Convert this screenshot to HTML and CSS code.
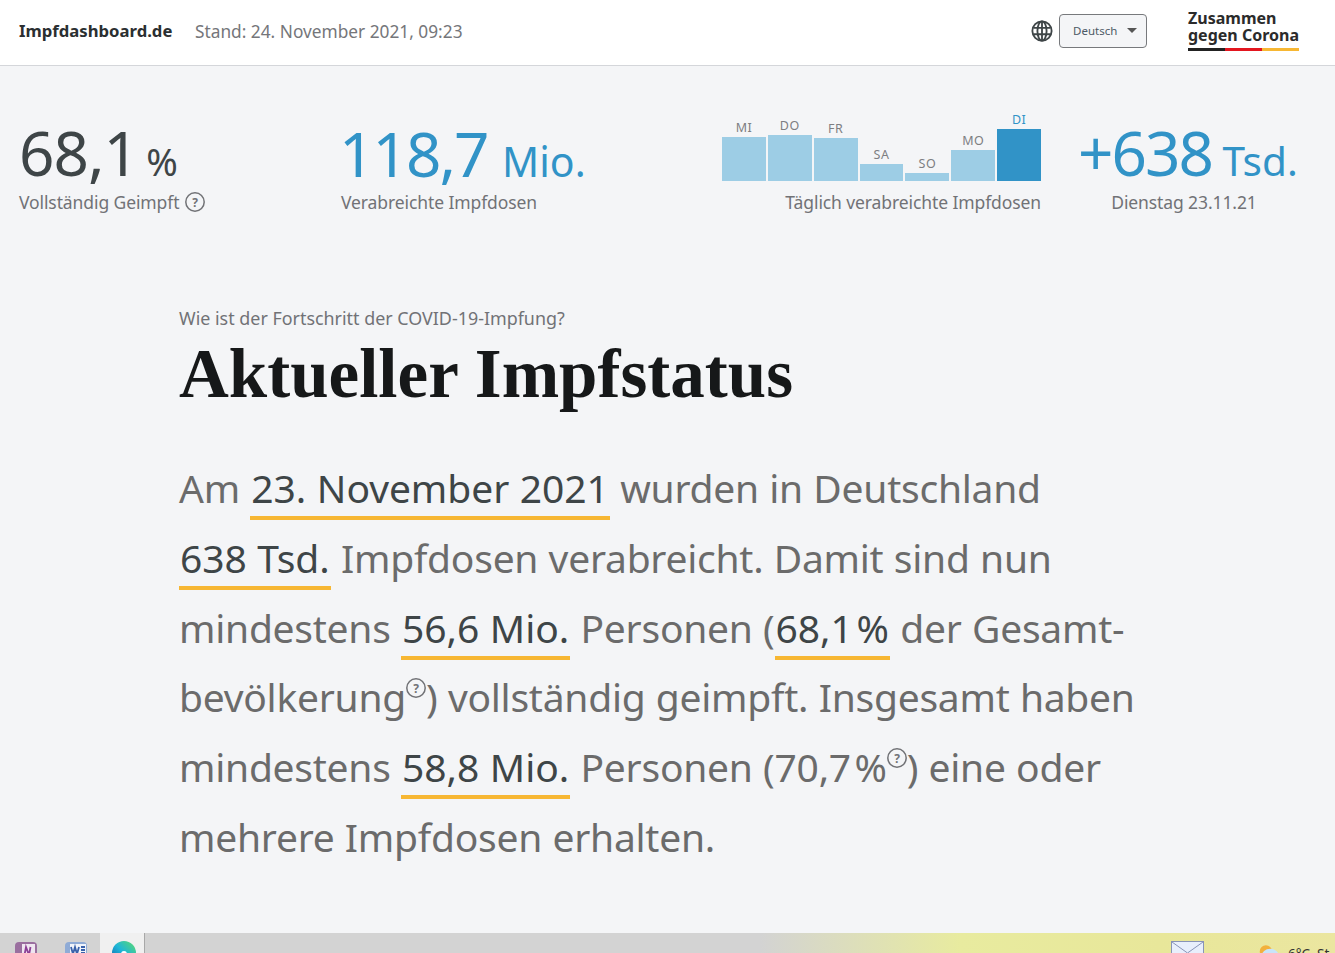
FILE: index.html

```html
<!DOCTYPE html>
<html lang="de">
<head>
  <meta charset="UTF-8">
  <title>Impfdashboard.de</title>
  <link rel="stylesheet" href="styles.css">
</head>
<body>

<header class="topbar">
  <div class="brand">Impfdashboard.de</div>
  <div class="stand">Stand: 24. November 2021, 09:23</div>
  <svg class="globe" viewBox="0 0 24 24">
    <circle cx="12" cy="12" r="10.500"/>
    <ellipse cx="12" cy="12" rx="5" ry="10.500"/>
    <path d="M12 1.500V22.500M2.500 8.500H21.500M2.500 15.500H21.500"/>
  </svg>
  <div class="lang">Deutsch <span class="caret"></span></div>
  <div class="logo">
    <div>Zusammen</div>
    <div>gegen Corona</div>
    <div class="flag"><span class="black"></span><span class="red"></span><span class="gold"></span></div>
  </div>
</header>

<section class="stats">
  <div class="stat">
    <div class="num">68,1 <small class="pct">%</small></div>
    <div class="cap">Vollständig Geimpft
      <svg class="help" viewBox="0 0 20 20"><circle cx="10" cy="10" r="9.200"/><text x="10" y="14.500">?</text></svg>
    </div>
  </div>
  <div class="stat">
    <div class="num blue">118,7 <small>Mio.</small></div>
    <div class="cap">Verabreichte Impfdosen</div>
  </div>
  <div class="stat">
    <div class="bars">
      <div class="day"><span>MI</span><i style="height:44px"></i></div>
      <div class="day"><span>DO</span><i style="height:46px"></i></div>
      <div class="day"><span>FR</span><i style="height:43px"></i></div>
      <div class="day"><span>SA</span><i style="height:17px"></i></div>
      <div class="day"><span>SO</span><i style="height:8px"></i></div>
      <div class="day"><span>MO</span><i style="height:31px"></i></div>
      <div class="day today"><span>DI</span><i style="height:52px"></i></div>
    </div>
    <div class="cap right">Täglich verabreichte Impfdosen</div>
  </div>
  <div class="stat center">
    <div class="num blue">+638 <small class="tsd">Tsd.</small></div>
    <div class="cap">Dienstag 23.11.21</div>
  </div>
</section>

<main class="status">
  <p class="kicker">Wie ist der Fortschritt der COVID-19-Impfung?</p>
  <h1>Aktueller Impfstatus</h1>
  <p class="lead">
    Am <b>23. November 2021</b> wurden in Deutschland<br>
    <b>638 Tsd.</b> Impfdosen verabreicht. Damit sind nun<br>
    mindestens <b>56,6 Mio.</b> Personen (<b>68,1&#8202;%</b> der Gesamt-<br>
    bevölkerung<svg class="help sup" viewBox="0 0 20 20"><circle cx="10" cy="10" r="9.200"/><text x="10" y="14.500">?</text></svg>) vollständig geimpft. Insgesamt haben<br>
    mindestens <b>58,8 Mio.</b> Personen (70,7&#8202;%<svg class="help sup" viewBox="0 0 20 20"><circle cx="10" cy="10" r="9.200"/><text x="10" y="14.500">?</text></svg>) eine oder<br>
    mehrere Impfdosen erhalten.
  </p>
</main>

<footer class="taskbar">
  <div class="task">
    <svg viewBox="0 0 24 24"><rect x="1" y="1" width="22" height="22" rx="4" fill="#9a6f9f"/><rect x="8" y="3" width="13" height="18" fill="#efe6f0"/><path d="M10.500 14L12 6L15 14L16.500 6" stroke="#8d3f96" stroke-width="1.800" fill="none"/></svg>
  </div>
  <div class="task">
    <svg viewBox="0 0 24 24"><rect x="1" y="1" width="22" height="22" rx="4" fill="#8fabd6"/><rect x="6" y="3" width="16" height="18" fill="#f1f4fa"/><path d="M7 6L9 13L11 6L13 13L15 6M17 6H21M17 9H21M17 12H21" stroke="#3a62ab" stroke-width="1.800" fill="none"/></svg>
  </div>
  <div class="task active">
    <svg viewBox="0 0 24 24"><defs><linearGradient id="edge" x1="0" y1="1" x2="1" y2="0"><stop offset="0" stop-color="#0c59a4"/><stop offset=".5" stop-color="#1fb6d8"/><stop offset="1" stop-color="#5fdc6a"/></linearGradient></defs><circle cx="12" cy="12" r="12" fill="url(#edge)"/><circle cx="12" cy="13" r="3" fill="#fff"/></svg>
  </div>
  <div class="sep"></div>
  <div class="tray">
    <svg class="mail" viewBox="0 0 33 23"><rect x=".5" y=".5" width="32" height="22" fill="#e8effc" stroke="#8894b8"/><path d="M1 1L16.500 12L32 1" fill="none" stroke="#8894b8"/></svg>
    <svg class="cloud" viewBox="0 0 24 20"><circle cx="9" cy="7" r="7" fill="#f2b13c"/><ellipse cx="14" cy="13" rx="10" ry="9" fill="#c8e4fa"/></svg>
    <span class="weather">6°C&nbsp;&nbsp;St</span>
  </div>
</footer>

</body>
</html>
```

FILE: styles.css

```css
* { box-sizing: border-box; margin: 0; padding: 0; }
html, body { width: 100%; height: 100%; overflow: hidden; }
body {
  display: flex; flex-direction: column;
  background: #f4f5f7; color: #6b6b6b;
  font-family: 'Noto Sans', sans-serif;
}

.topbar {
  display: flex; align-items: center; flex: none;
  height: 66px; padding: 0 36px 4px 19px;
  background: #fff; border-bottom: 1px solid #d4d6da;
}
.brand { font-size: 16.7px; font-weight: 700; color: #2b2f31; width: 176px; }
.stand { font-size: 17.3px; color: #75767a; flex: 1; padding-top: 1px; }
.globe { width: 22px; height: 22px; margin-right: 6px; fill: none; stroke: #3e4547; stroke-width: 2; }
.lang {
  display: flex; align-items: center; justify-content: space-between;
  width: 88px; height: 34px; padding: 0 9px 0 13px;
  background: #f4f5f7; border: 1px solid #77797c; border-radius: 4px;
  font-size: 11.5px; color: #4d5a66;
}
.caret { border-top: 5px solid #555; border-left: 5px solid transparent; border-right: 5px solid transparent; }
.logo {
  margin-left: 41px; width: 111px;
  font-size: 16px; font-weight: 700; line-height: 17px; color: #2b2b2b;
  white-space: nowrap;
}
.flag { display: flex; height: 3px; margin-top: 4px; }
.flag span { flex: 1; }
.black { background: #222; }
.red { background: #e3161f; }
.gold { background: #f7b733; }

.stats {
  display: grid; grid-template-columns: 322px 381px 358px 208px;
  flex: none; padding: 46px 0 0 19px; height: 149px; align-items: end;
}
.num { font-size: 62px; line-height: 56px; color: #3e4547; white-space: nowrap; letter-spacing: -1px; word-spacing: -7px; }
.num small { font-size: 41px; letter-spacing: 0; }
.num .pct { font-size: 38px; }
.num .tsd { font-size: 40.5px; margin-left: -4px; }
.num.blue { color: #3193c7; letter-spacing: -2px; word-spacing: 0.5px; margin-left: -2px; }
.num.blue small { letter-spacing: 0; }
.cap { font-size: 17.5px; line-height: 26px; color: #717276; display: flex; align-items: center; gap: 6px; white-space: nowrap; letter-spacing: -0.1px; }
.cap.right { justify-content: flex-end; width: 319px; margin-top: 8px; }
.center .cap { justify-content: center; }

.help { width: 20px; height: 20px; fill: none; stroke: #717276; stroke-width: 1.5; }
.help text { font-family: 'Noto Sans', sans-serif; font-size: 12px; font-weight: 700; text-anchor: middle; fill: #717276; stroke: none; }

.bars { display: flex; gap: 2px; align-items: flex-end; width: 319px; }
.day { display: flex; flex-direction: column; align-items: center; width: 44px; font-size: 12.5px; line-height: 16px; color: #7d7e82; letter-spacing: 0.5px; }
.day span { margin-bottom: 1px; }
.day i { display: block; width: 100%; background: #9dcde5; }
.today { color: #3193c7; }
.today i { background: #3193c7; }

.status { flex: 1; padding: 90px 0 0 179px; }
.kicker { font-size: 17.9px; line-height: 26px; color: #717276; }
h1 {
  font-family: 'Liberation Serif', serif; font-size: 69px; font-weight: 700;
  line-height: 82px; color: #161819; margin-top: 2px;
}
.lead { margin-top: 38px; font-size: 39px; line-height: 69.8px; letter-spacing: -0.25px; word-spacing: 0.5px; color: #6b6b6b; white-space: nowrap; }
.lead b { font-weight: 400; color: #3e4547; border-bottom: 4px solid #f7b733; padding: 0 1px 2px; letter-spacing: -0.05px; }
.help.sup { width: 20px; height: 20px; vertical-align: 14px; }

.taskbar {
  display: flex; flex: none; height: 20px; overflow: hidden;
  background: linear-gradient(90deg, #d3d3d3 0, #d3d3d3 760px, #e8eb9f 960px, #e8e79a 1160px, #ebe6a0 1335px);
}
.task { width: 50px; padding: 8px 0 0 13.5px; flex: none; }
.task svg { display: block; width: 24px; height: 24px; }
.task.active { background: #f0f0f0; width: 44px; padding-left: 12px; }
.sep { width: 1px; background: #a8a8a8; flex: none; }
.tray { display: flex; flex: 1; align-items: flex-start; justify-content: flex-end; }
.mail { width: 33px; height: 23px; margin: 8px 54px 0 0; flex: none; }
.cloud { width: 21px; height: 18px; margin: 12px 9px 0 0; flex: none; }
.weather { font-size: 13.5px; line-height: 16px; margin-top: 13px; color: #333; width: 47px; overflow: hidden; white-space: nowrap; }
```
